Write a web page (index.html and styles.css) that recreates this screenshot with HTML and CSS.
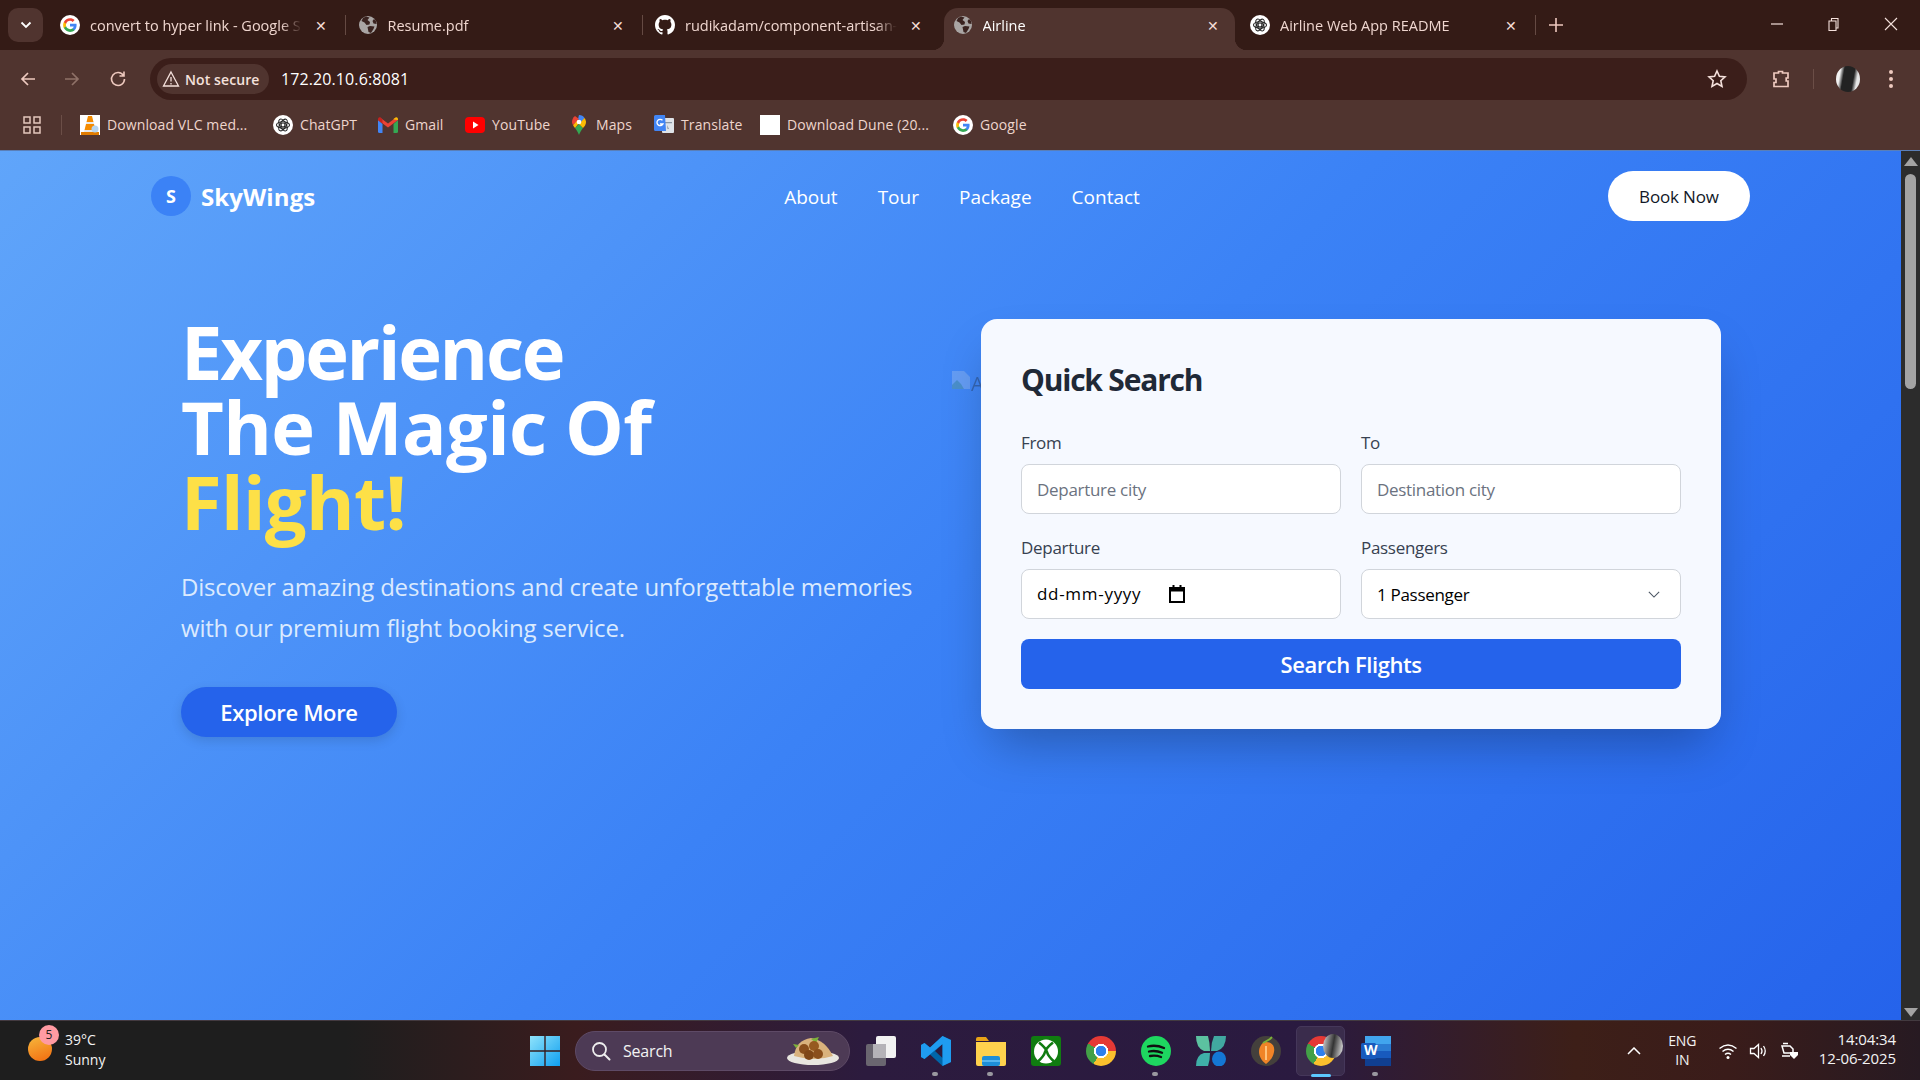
FILE: index.html
```html
<!DOCTYPE html>
<html lang="en">
<head>
<meta charset="utf-8">
<title>Airline</title>
<link rel="stylesheet" href="styles.css">
</head>
<body>
<svg class="defs" width="0" height="0">
  <defs>
    <symbol id="g" viewBox="0 0 24 24">
      <circle cx="12" cy="12" r="12" fill="#fff"/>
      <g transform="translate(3 3) scale(.75)">
      <path fill="#4285F4" d="M22.56 12.25c0-.78-.07-1.53-.2-2.25H12v4.26h5.92c-.26 1.37-1.04 2.53-2.21 3.31v2.77h3.57c2.08-1.92 3.28-4.74 3.28-8.09z"/>
      <path fill="#34A853" d="M12 23c2.97 0 5.46-.98 7.28-2.66l-3.57-2.77c-.98.66-2.23 1.06-3.71 1.06-2.86 0-5.29-1.93-6.16-4.53H2.18v2.84C3.99 20.53 7.7 23 12 23z"/>
      <path fill="#FBBC05" d="M5.84 14.09c-.22-.66-.35-1.36-.35-2.09s.13-1.43.35-2.09V7.07H2.18C1.43 8.55 1 10.22 1 12s.43 3.45 1.18 4.93l2.85-2.22.81-.62z"/>
      <path fill="#EA4335" d="M12 5.38c1.62 0 3.06.56 4.21 1.64l3.15-3.15C17.45 2.09 14.97 1 12 1 7.7 1 3.99 3.47 2.18 7.07l3.66 2.84c.87-2.6 3.3-4.53 6.16-4.53z"/>
      </g>
    </symbol>
    <symbol id="globe" viewBox="0 0 20 20">
      <circle cx="10" cy="10" r="9" fill="#a9a5a4"/>
      <path fill="#3a2320" d="M8 1.5 5 3 3.5 6l3 1.5 2 2.5 3-.5.5-2.5L9.5 5l2-2.5zM12 11l-2.500 1 1 5 2.500 1 2.500-4 1-2.500zM16 4l-1.500 2 1 2.500 3 .5-.5-3z"/>
    </symbol>
    <symbol id="github" viewBox="0 0 16 16">
      <path fill="#fff" d="M8 0C3.58 0 0 3.58 0 8c0 3.54 2.29 6.53 5.47 7.59.4.07.55-.17.55-.38 0-.19-.01-.82-.01-1.49-2.01.37-2.53-.49-2.69-.94-.09-.23-.48-.94-.82-1.13-.28-.15-.68-.52-.01-.53.63-.01 1.08.58 1.23.82.72 1.21 1.87.87 2.33.66.07-.52.28-.87.51-1.07-1.78-.2-3.64-.89-3.64-3.95 0-.87.31-1.59.82-2.15-.08-.2-.36-1.02.08-2.12 0 0 .67-.21 2.2.82.64-.18 1.32-.27 2-.27.68 0 1.36.09 2 .27 1.53-1.04 2.2-.82 2.2-.82.44 1.1.16 1.92.08 2.12.51.56.82 1.27.82 2.15 0 3.07-1.87 3.75-3.65 3.95.29.25.54.73.54 1.48 0 1.07-.01 1.93-.01 2.2 0 .21.15.46.55.38A8.013 8.013 0 0016 8c0-4.42-3.58-8-8-8z"/>
    </symbol>
    <symbol id="gpt" viewBox="0 0 20 20">
      <circle cx="10" cy="10" r="10" fill="#fff"/>
      <g fill="none" stroke="#222" stroke-width="1.100">
        <ellipse cx="10" cy="10" rx="6.500" ry="3.200"/>
        <ellipse cx="10" cy="10" rx="6.500" ry="3.200" transform="rotate(60 10 10)"/>
        <ellipse cx="10" cy="10" rx="6.500" ry="3.200" transform="rotate(120 10 10)"/>
        <circle cx="10" cy="10" r="2"/>
      </g>
    </symbol>
    <symbol id="vlc" viewBox="0 0 20 20">
      <rect width="20" height="20" fill="#fff"/>
      <path fill="#f48b00" d="M8 1h4l1.500 6h-7zM6 9h8l1.500 6h-11z"/>
      <path fill="#e8e8e8" d="M6.500 7h7l.5 2H6zM4.500 15h11l.5 2H4z"/>
      <rect x="1" y="17" width="18" height="3" fill="#e07b00"/>
      <circle cx="15" cy="14" r="3.500" fill="#b6d4ee"/>
    </symbol>
    <symbol id="gmail" viewBox="0 0 20 16">
      <path fill="#4285F4" d="M0 3v11.500A1.500 1.500 0 0 0 1.500 16H4.500V7z"/>
      <path fill="#34A853" d="M15.500 16h3a1.500 1.500 0 0 0 1.500-1.500V3l-4.500 4z"/>
      <path fill="#EA4335" d="M0 3 10 10.500 20 3 18 .5 10 6.500 2 .5z"/>
      <path fill="#FBBC05" d="M15.500 2.400 20 3 20 1.800Q19.500-.4 17.500.5L15.500 2z"/>
      <path fill="#C5221F" d="M0 3 4.500 6.400V2.400L2.500.5Q.5-.4 0 1.800z"/>
    </symbol>
    <symbol id="yt" viewBox="0 0 20 20">
      <rect y="2" width="20" height="16" rx="4" fill="#f00"/>
      <path fill="#fff" d="M8 6.500 13.500 10 8 13.500z"/>
    </symbol>
    <symbol id="maps" viewBox="0 0 14 20">
      <path fill="#34A853" d="M3 13c1.500 2 3 4 4 7 1-3 2.500-5 4-7L7 9z"/>
      <path fill="#FBBC05" d="M1 10c.5 1 1 2 2 3l5-6-3-2z"/>
      <path fill="#4285F4" d="M7 0C9.500 0 11.500 1.200 12.500 3L9 7.500 6 4z"/>
      <path fill="#EA4335" d="M3 1 7 4 1 10C.2 8.500 0 7.500 0 7 0 4.500 1 2.500 3 1z"/>
      <path fill="#FBBC05" d="M12.500 3c1 1.500 1.500 3 1.500 4 0 2.500-1.500 4.500-3 6L7 9z"/>
      <circle cx="7" cy="7" r="2.300" fill="#fff"/>
    </symbol>
    <symbol id="translate" viewBox="0 0 20 20">
      <rect x="8" y="3" width="12" height="15" rx="1" fill="#dfe3e8"/>
      <path fill="#8a96a3" d="M11 7h7v1.300h-7zM13 10l2 4h-1.500z"/>
      <path fill="#4285F4" d="M1.500 0H11l1 16H1.500A1.500 1.500 0 0 1 0 14.500V1.500A1.500 1.500 0 0 1 1.500 0z"/>
      <path fill="none" stroke="#fff" stroke-width="1.300" d="M8.500 5.300A3.200 3.200 0 1 0 9 9H6"/>
    </symbol>
    <symbol id="search" viewBox="0 0 20 20">
      <circle cx="8.500" cy="8.500" r="6.500" fill="none" stroke="#eee" stroke-width="1.800"/>
      <path stroke="#eee" stroke-width="2" stroke-linecap="round" d="m13.500 13.500 5 5"/>
    </symbol>
  </defs>
</svg>

<div class="window">
  <div class="tabstrip">
    <div class="tab-menu">
      <svg class="tab-chevron" viewBox="0 0 12 8"><path d="M1.500 1.500 6 6l4.500-4.500" fill="none" stroke="#fff" stroke-width="1.800"/></svg>
    </div>
    <div class="tab tab-sep">
      <svg class="fav"><use href="#g"/></svg>
      <span class="tab-title">convert to hyper link - Google S</span>
      <span class="tab-x">✕</span>
    </div>
    <div class="tab tab-sep">
      <svg class="fav"><use href="#globe"/></svg>
      <span class="tab-title">Resume.pdf</span>
      <span class="tab-x">✕</span>
    </div>
    <div class="tab">
      <svg class="fav"><use href="#github"/></svg>
      <span class="tab-title">rudikadam/component-artisan-</span>
      <span class="tab-x">✕</span>
    </div>
    <div class="tab tab-active">
      <svg class="fav"><use href="#globe"/></svg>
      <span class="tab-title">Airline</span>
      <span class="tab-x">✕</span>
    </div>
    <div class="tab tab-sep">
      <svg class="fav"><use href="#gpt"/></svg>
      <span class="tab-title">Airline Web App README</span>
      <span class="tab-x">✕</span>
    </div>
    <svg class="tab-plus" viewBox="0 0 14 14"><path d="M7 0v14M0 7h14" stroke="#eec9bf" stroke-width="1.600"/></svg>
    <div class="win-controls">
      <svg class="wc" viewBox="0 0 14 14"><path d="M1 7h12" stroke="#f5e1dc" stroke-width="1.200"/></svg>
      <svg class="wc wc-max" viewBox="0 0 14 14"><path d="M3 4h7v9.500H3zM5.500 4V1.500H12V11h-2" fill="none" stroke="#f5e1dc" stroke-width="1.100"/></svg>
      <svg class="wc" viewBox="0 0 14 14"><path d="M1 1l12 12M13 1 1 13" stroke="#f5e1dc" stroke-width="1.100"/></svg>
    </div>
  </div>

  <div class="toolbar">
    <svg class="nav-ico" viewBox="0 0 18 18"><path d="M16 9H3M9 3 3 9l6 6" fill="none" stroke="#eec9bf" stroke-width="1.700"/></svg>
    <svg class="nav-ico nav-dim" viewBox="0 0 18 18"><path d="M2 9h13M9 3l6 6-6 6" fill="none" stroke="#8f7168" stroke-width="1.700"/></svg>
    <svg class="nav-ico" viewBox="0 0 18 18"><path d="M14.500 5.500A6.500 6.500 0 1 0 15.500 9M15 1.500V6h-4.500" fill="none" stroke="#eec9bf" stroke-width="1.600"/></svg>
    <div class="omnibox">
      <div class="chip">
        <svg class="warn" viewBox="0 0 18 18"><path d="M9 2 16.500 16h-15zM9 7v4.500M9 13v1.500" fill="none" stroke="#f5e1dc" stroke-width="1.300"/></svg>
        <span>Not secure</span>
      </div>
      <span class="url">172.20.10.6:8081</span>
      <svg class="star" viewBox="0 0 20 20"><path d="m10 2 2.400 5.300 5.600.6-4.200 3.800 1.200 5.700L10 14.500l-5 2.900 1.200-5.700L2 7.900l5.600-.6z" fill="none" stroke="#f5e1dc" stroke-width="1.600"/></svg>
    </div>
    <svg class="ext" viewBox="0 0 20 20"><path d="M7.500 4V2.500h4V4H17v5h-1.800v3H17v5.500H3v-4h2v-3.500H3V4z" fill="none" stroke="#eec9bf" stroke-width="1.700"/></svg>
    <div class="tool-sep"></div>
    <div class="profile"></div>
    <div class="kebab"><i></i><i></i><i></i></div>
  </div>

  <div class="bookmarks">
    <svg class="apps" viewBox="0 0 18 18"><path d="M1 1h6v6H1zM11 1h6v6h-6zM1 11h6v6H1zM11 11h6v6h-6z" fill="none" stroke="#e3c6bd" stroke-width="1.500"/></svg>
    <div class="tool-sep bm-sep"></div>
    <div class="bm bm-vlc"><svg class="fav"><use href="#vlc"/></svg><span>Download VLC med...</span></div>
    <div class="bm bm-gpt"><svg class="fav"><use href="#gpt"/></svg><span>ChatGPT</span></div>
    <div class="bm bm-gmail"><svg class="fav"><use href="#gmail"/></svg><span>Gmail</span></div>
    <div class="bm bm-yt"><svg class="fav"><use href="#yt"/></svg><span>YouTube</span></div>
    <div class="bm bm-maps"><svg class="fav"><use href="#maps"/></svg><span>Maps</span></div>
    <div class="bm bm-tr"><svg class="fav"><use href="#translate"/></svg><span>Translate</span></div>
    <div class="bm bm-dune"><i class="blank"></i><span>Download Dune (20...</span></div>
    <div class="bm"><svg class="fav"><use href="#g"/></svg><span>Google</span></div>
  </div>

  <div class="viewport">
    <main class="page">
      <header class="site-header">
        <div class="logo"><span class="logo-mark">S</span><span class="logo-text">SkyWings</span></div>
        <nav class="site-nav">
          <a>About</a><a>Tour</a><a>Package</a><a>Contact</a>
        </nav>
        <button class="book">Book Now</button>
      </header>
      <section class="hero">
        <div class="hero-copy">
          <h1><span class="h1-tight">Experience</span><br>The Magic Of<br><span class="accent">Flight!</span></h1>
          <p>Discover amazing destinations and create unforgettable memories with our premium flight booking service.</p>
          <button class="explore">Explore More</button>
        </div>
        <div class="broken">
          <svg class="broken-ico" viewBox="0 0 20 20"><path d="M1 1h12l6 6v12H1z" fill="#a8c4ee"/><path d="M1 19v-4l5-5 4 4 3 5z" fill="#5f9e7c"/></svg>
          <span>A</span>
        </div>
        <form class="card">
          <h2>Quick Search</h2>
          <div class="fields">
            <label class="field"><span>From</span><input placeholder="Departure city"></label>
            <label class="field"><span>To</span><input placeholder="Destination city"></label>
            <div class="field"><span>Departure</span>
              <div class="control date"><span class="date-text">dd-mm-yyyy</span>
                <svg class="cal" viewBox="0 0 16 18"><path d="M1 3h14v14H1z" fill="none" stroke="#000" stroke-width="2"/><path d="M1 3h14v3.500H1z" fill="#000"/><path d="M4.500 0v3M11.500 0v3" stroke="#000" stroke-width="2"/></svg>
              </div>
            </div>
            <div class="field"><span>Passengers</span>
              <div class="control select"><span>1 Passenger</span>
                <svg class="sel-arrow" viewBox="0 0 14 8"><path d="m1 1 6 6 6-6" fill="none" stroke="#4b5563" stroke-width="1.300"/></svg>
              </div>
            </div>
          </div>
          <button type="button" class="search-btn">Search Flights</button>
        </form>
      </section>
    </main>
    <aside class="scrollbar">
      <i class="arrow-up"></i>
      <i class="thumb"></i>
      <i class="arrow-down"></i>
    </aside>
  </div>

  <footer class="taskbar">
    <div class="weather">
      <i class="sun"></i><b class="badge">5</b>
      <div class="weather-text"><span>39°C</span><span>Sunny</span></div>
    </div>
    <div class="task-center">
      <div class="task">
        <svg class="ti" viewBox="0 0 30 30"><defs><linearGradient id="w" x1="0" y1="0" x2="1" y2="1"><stop offset="0" stop-color="#8fe3fb"/><stop offset="1" stop-color="#0f9ff0"/></linearGradient></defs><path fill="url(#w)" d="M0 0h14.300v14.300H0zM15.700 0H30v14.300H15.700zM0 15.700h14.300V30H0zM15.700 15.700H30V30H15.700z"/></svg>
      </div>
      <div class="searchbox">
        <svg class="sb-ico"><use href="#search"/></svg>
        <span>Search</span>
        <svg class="food" viewBox="0 0 54 30">
          <ellipse cx="27" cy="22" rx="26" ry="7" fill="#e8e6df"/>
          <path d="M8 20Q10 4 25 2q14 2 22 18-18 6-39 0z" fill="#d9b27c"/>
          <path d="M25 3 33 1l-3 6zM10 12l-3-4 6 1z" fill="#7db23a"/>
          <circle cx="18" cy="13" r="5" fill="#8a4f1c"/><circle cx="28" cy="10" r="5" fill="#96591f"/><circle cx="23" cy="19" r="5" fill="#7f4717"/><circle cx="32" cy="18" r="5" fill="#8a4f1c"/>
        </svg>
      </div>
      <div class="task">
        <svg class="ti" viewBox="0 0 30 30"><rect x="0" y="8" width="20" height="22" rx="2" fill="#6a6670"/><rect x="10" y="0" width="20" height="22" rx="2" fill="#f2f2f2"/><rect x="7" y="8" width="13" height="14" fill="#b5b3b8"/></svg>
      </div>
      <div class="task has-dot">
        <svg class="ti" viewBox="0 0 30 30"><path fill="#0065a9" d="M21.500 0 30 4v22l-8.500 4L9 18.500 3.500 23 0 21V9l3.500-2L9 11.500zM21.500 8l-7.500 7 7.500 7z"/><path fill="#1f9cf0" d="M21.500 0 30 4v22l-8.500 4zM0 21l3.500 2L21.500 8V0L9 11.500 3.500 7 0 9z"/></svg>
      </div>
      <div class="task has-dot">
        <svg class="ti" viewBox="0 0 30 30"><path fill="#e8a317" d="M0 3a2 2 0 0 1 2-2h8l3 4h-13z"/><path fill="#ffd24d" d="M0 6h30v22a2 2 0 0 1-2 2H2a2 2 0 0 1-2-2z"/><rect x="6" y="20" width="18" height="10" rx="2" fill="#1e8fd8"/><rect x="6" y="24" width="18" height="2" fill="#56b6ee"/></svg>
      </div>
      <div class="task">
        <svg class="ti" viewBox="0 0 30 30"><rect width="30" height="30" rx="3" fill="#107c10"/><circle cx="15" cy="15.500" r="12" fill="#fff"/><path d="M8 6.500Q15 12 16 16T23 25.500M22 6.500Q15 12 14 16T7 25.500" fill="none" stroke="#107c10" stroke-width="2.600"/></svg>
      </div>
      <div class="task"><i class="chrome"></i></div>
      <div class="task has-dot">
        <svg class="ti" viewBox="0 0 30 30"><circle cx="15" cy="15" r="15" fill="#1ed760"/><path d="M7 10.500q8-2 16 1.500M8 15.500q7-1.500 13 1.300M9 20q6-1 11 1" fill="none" stroke="#111" stroke-width="2.300" stroke-linecap="round"/></svg>
      </div>
      <div class="task">
        <svg class="ti" viewBox="0 0 30 30"><path fill="#5cc2a0" d="M0 0h12q2 7 2 15H8Q0 12 0 0z"/><path fill="#41a8a0" d="M30 0H18q-3 7-3 15h6q9-3 9-15z"/><path fill="#3fb0a8" d="M0 30h12q2-6 2-13H8q-8 2-8 13z"/><ellipse cx="23" cy="23" rx="7" ry="7.500" fill="#1477d4"/></svg>
      </div>
      <div class="task">
        <svg class="ti" viewBox="0 0 30 30"><circle cx="15" cy="15" r="15" fill="#44403c"/><path d="M15 6c7 0 9 5 8 10-1 6-5 10-8 12-3-2-7-7-7-12 0-5 3-10 7-10z" fill="#f08427"/><path d="M12 7 19 3 21 1" fill="none" stroke="#7db23a" stroke-width="2"/><path d="M15 10v14" stroke="#ffc27a" stroke-width="2"/></svg>
      </div>
      <div class="task task-active">
        <i class="chrome"></i>
        <i class="chrome-profile"></i>
      </div>
      <div class="task has-dot">
        <svg class="ti" viewBox="0 0 30 30"><rect x="4" width="26" height="30" rx="2" fill="#185abd"/><rect x="4" width="26" height="8" fill="#41a5ee"/><rect x="4" y="8" width="26" height="7" fill="#2b7cd3"/><rect x="4" y="22" width="26" height="8" fill="#103f91"/><rect y="7" width="15" height="16" rx="1.500" fill="#185abd"/></svg>
        <span class="w-letter">W</span>
      </div>
    </div>
    <div class="tray">
      <svg class="tray-chev" viewBox="0 0 14 8"><path d="m1 7 6-6 6 6" fill="none" stroke="#fff" stroke-width="1.500"/></svg>
      <div class="lang"><span>ENG</span><span>IN</span></div>
      <svg class="tray-ico" viewBox="0 0 20 18"><path d="M1.500 6.500q8.500-7 17 0M4.500 9.500q5.500-4.500 11 0M7 12.500q3-2.500 6 0" fill="none" stroke="#fff" stroke-width="1.500"/><circle cx="10" cy="15.500" r="1.500" fill="#fff"/></svg>
      <svg class="tray-ico" viewBox="0 0 20 18"><path d="M1.500 6.500H5L9.500 2.500v13L5 11.500H1.500z" fill="none" stroke="#fff" stroke-width="1.300"/><path d="M12 6q2 3 0 6M14.500 4q3.500 5 0 10" fill="none" stroke="#fff" stroke-width="1.300"/></svg>
      <svg class="tray-ico" viewBox="0 0 20 18"><path d="M3 4h8l3 3v4H5zM4 1.500h5M3 14h8" fill="none" stroke="#fff" stroke-width="1.500"/><path d="M11 10h8v3l-4 4-4-4z" fill="#fff"/></svg>
      <div class="clock"><span>14:04:34</span><span>12-06-2025</span></div>
    </div>
  </footer>
</div>
</body>
</html>
```
FILE: styles.css
```css
* { box-sizing: border-box; }
html, body { margin: 0; height: 100%; overflow: hidden; }
body { font-family: "Open Sans", "Noto Sans", sans-serif; }
.defs { position: absolute; }
.window { width: 1920px; height: 1080px; display: flex; flex-direction: column; }

/* tab strip */
.tabstrip { height: 50px; background: #341b16; display: flex; align-items: flex-end; padding-left: 8px; color: #efd6cf; }
.tab-menu { width: 35px; height: 34px; margin: 0 5px 8px 0; border-radius: 10px; background: #50342f; display: flex; align-items: center; justify-content: center; }
.tab-chevron { width: 12px; height: 8px; }
.tab { width: 297.5px; height: 42px; padding: 0 16px 8px 12px; display: flex; align-items: center; gap: 10px; position: relative; font-size: 14.5px; }
.tab-sep::after { content: ""; position: absolute; right: 0; top: 7px; height: 20px; width: 1px; background: #654a43; }
.fav { width: 20px; height: 20px; flex: none; }
.tab-title { flex: 1; min-width: 0; white-space: nowrap; overflow: hidden; -webkit-mask-image: linear-gradient(to right, #000 90%, transparent 100%); mask-image: linear-gradient(to right, #000 90%, transparent 100%); }
.tab-x { font-size: 14px; width: 18px; text-align: center; color: #f5dcd5; flex: none; }
.tab-active { width: 291px; margin: 0 3.5px 0 3px; padding-left: 9px; padding-right: 13px; background: #50342f; border-radius: 14px 14px 0 0; color: #fff; }
.tab-active::before, .tab-active::after { content: ""; position: absolute; bottom: 0; width: 12px; height: 12px; }
.tab-active::before { left: -12px; background: radial-gradient(circle at 0 0, transparent 12px, #50342f 12.500px); }
.tab-active::after { right: -12px; background: radial-gradient(circle at 100% 0, transparent 12px, #50342f 12.500px); }
.tab-plus { width: 14px; height: 14px; margin: 0 0 18px 13px; flex: none; }
.win-controls { margin-left: auto; display: flex; height: 50px; align-items: center; padding-bottom: 2px; }
.wc { width: 14px; height: 14px; margin-right: 42px; }
.wc-max { margin-right: 44px; }
.wc:last-child { margin-right: 22px; }

/* toolbar */
.toolbar { height: 50px; background: #50342f; display: flex; align-items: center; padding: 8px 0 0; }
.nav-ico { width: 18px; height: 18px; margin-left: 19px; margin-right: 7px; flex: none; }
.nav-dim { margin-left: 19px; margin-right: 9px; }
.omnibox { width: 1597px; height: 42px; margin-left: 16px; border-radius: 21px; background: #3b1e1a; display: flex; align-items: center; padding: 0 20px 0 7px; color: #fff; }
.chip { height: 30px; width: 112px; border-radius: 15px; background: #50342f; display: flex; align-items: center; gap: 5px; padding-left: 5px; font-size: 14px; font-weight: 600; letter-spacing: .1px; color: #f5e1dc; white-space: nowrap; }
.warn { width: 18px; height: 18px; flex: none; }
.url { margin-left: 12px; font-size: 16px; letter-spacing: .1px; }
.star { width: 20px; height: 20px; margin-left: auto; }
.ext { width: 20px; height: 20px; margin-left: 24px; flex: none; }
.tool-sep { width: 1px; height: 20px; background: #6b4e47; margin-left: 22px; flex: none; }
.profile { width: 24px; height: 26px; border-radius: 50%; margin-left: 22px; flex: none; background: linear-gradient(100deg, #f2f2f2 0 18%, #222 32% 68%, #e6e6e6 82%); }
.kebab { margin-left: 29px; display: flex; flex-direction: column; gap: 3px; }
.kebab i { width: 4px; height: 4px; border-radius: 50%; background: #eec9bf; display: block; }

/* bookmarks */
.bookmarks { height: 51px; padding-bottom: 1px; background: #50342f; display: flex; align-items: center; padding-left: 23px; color: #eed5cd; font-size: 14px; letter-spacing: .1px; border-bottom: 1px solid #5a7fb8; }
.apps { width: 18px; height: 18px; flex: none; }
.bm-sep { margin-left: 20px; margin-right: 18px; }
.bm { display: flex; align-items: center; gap: 7px; white-space: nowrap; }
.bm-vlc { width: 193px; }
.bm-gpt { width: 105px; }
.bm-gmail { width: 87px; }
.bm-yt { width: 104px; }
.bm-maps { width: 85px; }
.bm-tr { width: 106px; }
.bm-dune { width: 193px; }
.blank { width: 20px; height: 20px; background: #fff; display: block; flex: none; }

/* page */
.viewport { flex: 1; display: flex; min-height: 0; }
.page { flex: 1; background: linear-gradient(135deg, #60a5fa 0%, #3b82f6 50%, #2563eb 100%); color: #fff; }
.site-header { display: flex; justify-content: space-between; align-items: center; padding: 20px 151px; height: 90px; }
.logo { display: flex; align-items: center; gap: 10px; width: 165px; }
.logo-mark { width: 40px; height: 40px; flex: none; border-radius: 50%; background: #3b82f6; display: flex; align-items: center; justify-content: center; font-weight: 700; font-size: 18px; }
.logo-text { font-size: 24px; font-weight: 700; letter-spacing: .1px; }
.site-nav { display: flex; gap: 40px; font-size: 19px; margin-top: 1px; }
.book { width: 142px; height: 50px; border: 0; border-radius: 25px; background: #fff; color: #111827; font: 500 17px "Open Sans", sans-serif; letter-spacing: -.15px; }
.hero { display: grid; grid-template-columns: 760px 740px; gap: 40px; padding: 78px 180px 0 181px; position: relative; }
.hero-copy { min-width: 0; }
h1 { margin: -5px 0 0; font-size: 74px; line-height: 75px; font-weight: 700; letter-spacing: -.65px; }
.h1-tight { letter-spacing: -2.3px; }
.accent { color: #fde047; }
.hero-copy p { margin: 27px 0 0; font-size: 24px; line-height: 41px; color: #dbeafe; letter-spacing: -.2px; }
.explore { margin-top: 39px; width: 216px; height: 50px; border: 0; border-radius: 25px; background: #2563eb; color: #fff; font: 600 22px "Open Sans", sans-serif; letter-spacing: -.33px; box-shadow: 0 4px 12px rgba(0,0,0,.12); }
.broken { position: absolute; left: 951px; top: 129px; display: flex; align-items: flex-start; opacity: .35; color: #1f2937; font-size: 20px; }
.broken-ico { width: 20px; height: 20px; }
.card { position: relative; height: 410px; background: #f6f9ff; border-radius: 16px; padding: 40px; color: #1f2937; box-shadow: 0 25px 50px -12px rgba(0,0,0,.28); }
h2 { margin: 0; font-size: 30px; line-height: 42px; font-weight: 700; letter-spacing: -1.2px; }
.fields { display: grid; grid-template-columns: 320px 320px; gap: 22px 20px; margin-top: 30px; }
.field { display: flex; flex-direction: column; gap: 9px; font-size: 17px; line-height: 24px; font-weight: 500; color: #374151; letter-spacing: -.3px; }
.field input, .control { height: 50px; width: 100%; border: 1px solid #d1d5db; border-radius: 8px; background: #fff; padding: 0 15px; font: 400 17px "Open Sans", sans-serif; letter-spacing: -.3px; color: #000; outline: 0; }
.field input::placeholder { color: #6b7280; opacity: 1; }
.control { display: flex; align-items: center; }
.date-text { width: 132px; margin-top: -1px; letter-spacing: .7px; white-space: nowrap; }
.cal { width: 16px; height: 18px; }
.select { justify-content: space-between; padding-right: 20px; }
.sel-arrow { width: 12px; height: 7px; }
.search-btn { width: 100%; height: 50px; margin-top: 20px; border: 0; border-radius: 8px; background: #2563eb; color: #fff; font: 600 22px "Open Sans", sans-serif; letter-spacing: -.45px; }

/* scrollbar */
.scrollbar { width: 19px; background: #2c2c2c; display: flex; flex-direction: column; align-items: center; padding: 6px 0 3px; }
.arrow-up { width: 0; height: 0; border: 7px solid transparent; border-top: 0; border-bottom: 9px solid #a3a3a3; }
.thumb { width: 11px; height: 215px; border-radius: 6px; background: #a3a3a3; margin-top: 8px; }
.arrow-down { width: 0; height: 0; margin-top: auto; border: 7px solid transparent; border-bottom: 0; border-top: 9px solid #a3a3a3; }

/* taskbar */
.taskbar { height: 60px; display: grid; grid-template-columns: 1fr auto 1fr; align-items: center; color: #f3f3f3; font-size: 14px; background: linear-gradient(90deg, #1e1e1e 0%, #1e1e1e 18%, #3a1c1e 30%, #2c1b3e 45%, #2a1a40 68%, #3d1f18 82%, #3a1c1a 90%, #271a22 100%); border-top: 1px solid #433a40; }
.weather { position: relative; padding-left: 65px; margin-top: -2px; }
.sun { position: absolute; left: 28px; top: 7px; width: 24px; height: 24px; border-radius: 50%; background: linear-gradient(160deg, #f6b73c, #f26b0f); }
.badge { position: absolute; left: 39px; top: -5px; width: 20px; height: 20px; border-radius: 50%; background: #ff9aa2; color: #222; font-size: 12px; font-weight: 400; line-height: 20px; text-align: center; }
.weather-text { display: flex; flex-direction: column; line-height: 20px; }
.task-center { display: flex; align-items: center; }
.task { width: 55px; height: 50px; display: flex; align-items: center; justify-content: center; position: relative; }
.ti { width: 30px; height: 30px; }
.has-dot::after { content: ""; position: absolute; left: 24px; bottom: 0; width: 6px; height: 4px; border-radius: 2px; background: #9a98a0; }
.searchbox { width: 275px; height: 40px; margin: 0 3px; border-radius: 20px; background: #4d3a55; border: 1px solid #5e4a66; display: flex; align-items: center; padding-left: 15px; gap: 12px; font-size: 16px; letter-spacing: -.2px; }
.sb-ico { width: 20px; height: 20px; }
.food { width: 54px; height: 30px; margin-left: auto; margin-right: 9px; }
.chrome { width: 30px; height: 30px; border-radius: 50%; display: block; background: radial-gradient(circle, #2f80ed 0 24%, #fff 25% 33%, transparent 34%), conic-gradient(#e53935 0 90deg, #fbc02d 90deg 210deg, #43a047 210deg 300deg, #e53935 300deg); }
.task-active { background: #3a2c4c; border-radius: 5px; width: 49px; margin: 0 3px; border: 1px solid #45375a; }
.task-active::after { content: ""; position: absolute; left: 14px; bottom: -2px; width: 20px; height: 3px; border-radius: 2px; background: #5cc8ff; }
.chrome-profile { position: absolute; left: 26px; top: 7px; width: 20px; height: 24px; border-radius: 50%; background: linear-gradient(100deg, #ddd, #333 50%, #eee); }
.w-letter { position: absolute; left: 16px; top: 14px; color: #fff; font-size: 14px; font-weight: 700; }
.tray { display: flex; align-items: center; justify-content: flex-end; padding-right: 24px; }
.tray-chev { width: 14px; height: 8px; margin-right: 21px; }
.lang { width: 40px; display: flex; flex-direction: column; align-items: center; line-height: 19px; letter-spacing: -.2px; margin: -2px 16px 0 0; }
.tray-ico { width: 20px; height: 18px; margin-right: 10.5px; }
.clock { margin: -3px 0 0 9px; display: flex; flex-direction: column; align-items: flex-end; line-height: 19px; font-size: 15px; letter-spacing: -.1px; }
```
